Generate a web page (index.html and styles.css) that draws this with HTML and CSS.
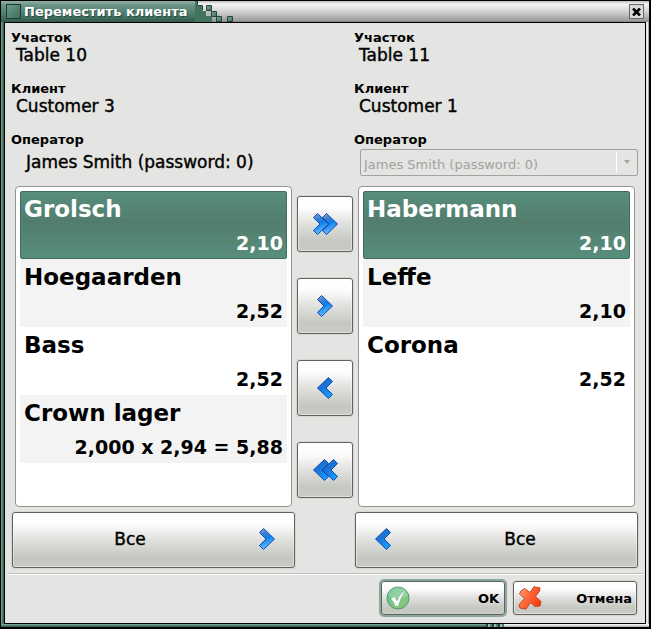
FILE: index.html
```html
<!DOCTYPE html>
<html lang="ru">
<head>
<meta charset="utf-8">
<title>Переместить клиента</title>
<link rel="stylesheet" href="styles.css">
</head>
<body>
<svg class="defs" width="0" height="0" aria-hidden="true">
  <defs>
    <linearGradient id="blue" x1="0" y1="0" x2="0.3" y2="1">
      <stop offset="0" stop-color="#8fb0e0"/>
      <stop offset="0.3" stop-color="#3f7fd0"/>
      <stop offset="0.55" stop-color="#0a80ea"/>
      <stop offset="1" stop-color="#6cc0ff"/>
    </linearGradient>
    <linearGradient id="blue-back" x1="0" y1="0" x2="0.6" y2="1">
      <stop offset="0" stop-color="#4a84d0"/>
      <stop offset="0.45" stop-color="#1c70d4"/>
      <stop offset="1" stop-color="#129cff"/>
    </linearGradient>
    <linearGradient id="green" x1="0" y1="0" x2="1" y2="1">
      <stop offset="0" stop-color="#58c088"/>
      <stop offset="0.5" stop-color="#7cc68c"/>
      <stop offset="1" stop-color="#8cc870"/>
    </linearGradient>
    <linearGradient id="red" x1="0" y1="0" x2="1" y2="0.6">
      <stop offset="0" stop-color="#ffa878"/>
      <stop offset="0.5" stop-color="#ff6838"/>
      <stop offset="1" stop-color="#f84010"/>
    </linearGradient>
    <linearGradient id="tile" x1="0" y1="0" x2="1" y2="1">
      <stop offset="0" stop-color="#7fa899"/>
      <stop offset="1" stop-color="#3f6e5d"/>
    </linearGradient>
    <path id="right" d="M4.500 .5 15.500 11 4.500 21.500 .5 17.500 7 11 .5 4.500Z" fill="url(#blue)" stroke="#0c48b0"/>
    <path id="left" d="M11.500 .5 .5 11 11.500 21.500 15.500 17.500 9 11 15.500 4.500Z" fill="url(#blue-back)" stroke="#0c48b0"/>
  </defs>
</svg>
<div class="window">
  <header class="titlebar">
    <div class="caption">
      <span class="sysmenu"></span>
      <h1 class="title">Переместить клиента</h1>
    </div>
    <svg class="tiles" width="40" height="21" viewBox="0 0 40 21" aria-hidden="true">
      <path d="M0 0h2v5h5v5h4v5h6v6H0z" fill="#44735f"/>
      <path d="M2.500 0v4.500h5v5" fill="none" stroke="#24453a"/>
      <g fill="url(#tile)" stroke="#24453a">
        <path d="M11.500 4.500h5v5h-5z"/><path d="M16.500 10.500h5v5h-5z"/><path d="M21.500 15.500h5v5h-5z"/><path d="M32.500 15.500h5v5h-5z"/>
      </g>
      <path d="M12 10h4v4h-4z" fill="#b8b8b8"/>
    </svg>
    <button class="close" type="button" aria-label="Закрыть">
      <svg width="9" height="8" viewBox="0 0 9 8"><path d="M1 .5 8 7.500M8 .5 1 7.500" stroke="#000" stroke-width="2.600"/></svg>
    </button>
  </header>
  <main class="content">
    <div class="board">
      <dl class="info">
        <div class="field"><dt>Участок</dt><dd>Table 10</dd></div>
        <div class="field"><dt>Клиент</dt><dd>Customer 3</dd></div>
        <div class="field operator"><dt>Оператор</dt><dd>James Smith (password: 0)</dd></div>
      </dl>
      <dl class="info second">
        <div class="field"><dt>Участок</dt><dd>Table 11</dd></div>
        <div class="field"><dt>Клиент</dt><dd>Customer 1</dd></div>
        <div class="field operator"><dt><label for="operator">Оператор</label></dt>
          <dd class="combo"><select id="operator" disabled><option>James Smith (password: 0)</option></select></dd></div>
      </dl>

      <ul class="list">
        <li class="item selected"><span class="name">Grolsch</span><span class="price">2,10</span></li>
        <li class="item"><span class="name">Hoegaarden</span><span class="price">2,52</span></li>
        <li class="item"><span class="name">Bass</span><span class="price">2,52</span></li>
        <li class="item"><span class="name">Crown lager</span><span class="price">2,000 x 2,94 = 5,88</span></li>
      </ul>
      <div class="movers">
        <button class="button mover" type="button" aria-label="Переместить все вправо"><svg width="25" height="22" viewBox="0 0 25 22"><use href="#right" x="9"/><use href="#right"/></svg></button>
        <button class="button mover" type="button" aria-label="Переместить вправо"><svg width="16" height="22" viewBox="0 0 16 22"><use href="#right"/></svg></button>
        <button class="button mover" type="button" aria-label="Переместить влево"><svg width="16" height="22" viewBox="0 0 16 22"><use href="#left"/></svg></button>
        <button class="button mover" type="button" aria-label="Переместить все влево"><svg width="25" height="22" viewBox="0 0 25 22"><use href="#left"/><use href="#left" x="9"/></svg></button>
      </div>
      <ul class="list">
        <li class="item selected"><span class="name">Habermann</span><span class="price">2,10</span></li>
        <li class="item"><span class="name">Leffe</span><span class="price">2,10</span></li>
        <li class="item"><span class="name">Corona</span><span class="price">2,52</span></li>
      </ul>

      <button class="button all" type="button"><span class="all-text">Все</span><svg width="16" height="22" viewBox="0 0 16 22"><use href="#right"/></svg></button>
      <button class="button all all-left" type="button"><svg width="16" height="22" viewBox="0 0 16 22"><use href="#left"/></svg><span class="all-text">Все</span></button>
    </div>
    <footer class="actions">
      <button class="button action default" type="button">
        <svg width="24" height="24" viewBox="0 0 24 24"><circle cx="12" cy="12" r="11" fill="url(#green)" stroke="#4c9a68"/><path d="M2 10a10 9 0 0 1 20 0q-10 4-20 0" fill="#fff" opacity=".2"/><path d="M5 12.500 8.500 11l2.500 4.500Q13.500 9 18.500 5 14 12 12 20h-2.500Q8 15.500 5 12.500Z" fill="#fff"/></svg>
        <span>OK</span>
      </button>
      <button class="button action" type="button">
        <svg width="24" height="24" viewBox="0 0 24 24"><path d="M3 5 6.500 2.500 12 6.500 16 .7 22 2 21.500 5 17.500 10.500 23 15.500 22 20 17 20.500 12.500 16.500 8 23 2 22 1 19 6.500 12.500 1.500 8Z" fill="url(#red)" stroke="#cc4020" stroke-linejoin="round"/></svg>
        <span>Отмена</span>
      </button>
    </footer>
  </main>
</div>
</body>
</html>
```
FILE: styles.css
```css
* { box-sizing: border-box; }

body {
  margin: 0;
  background: #000;
  font-family: "DejaVu Sans", sans-serif;
  font-size: 13px;
  color: #000;
}

.defs { position: absolute; }
svg { display: block; flex: none; }
button, select { font: inherit; color: inherit; }

.window {
  display: flex;
  flex-direction: column;
  min-height: 100vh;
  border: 1px solid #000;
  border-width: 1px 2px 2px 1px;
  padding: 0 3px 3px;
  background:
    repeating-linear-gradient(90deg, #24453a 0 2px, #9dbab0 2px 4px, #4c7f6d 4px 6px) 77% bottom / 18px 3px no-repeat,
    linear-gradient(#8fb0a4, #4c7f6d 50%, #35594c) left bottom / 75% 3px no-repeat,
    linear-gradient(#fff, #aaa) left bottom / 100% 3px no-repeat,
    linear-gradient(90deg, #7fa899, #4c7f6d 50%, #35594c) left top / 3px 100% no-repeat,
    linear-gradient(90deg, #ddd, #eee 50%, #888) right top / 3px 100% no-repeat;
}

.titlebar {
  display: flex;
  align-items: center;
  height: 21px;
  margin: 0 -3px;
  padding-right: 5px;
  background: linear-gradient(#bbb, #f4f4f4 15%, #d2d2d2 50%, #999 95%, #777);
}

.caption {
  display: flex;
  align-items: center;
  height: 21px;
  padding: 0 8px 0 5px;
  gap: 3px;
  background: linear-gradient(#8fb0a4, #6c9485 20%, #4c7f6d 60%, #35594c);
}

.sysmenu {
  width: 15px;
  height: 15px;
  border: 1px solid #1f3c33;
  background: linear-gradient(135deg, #6f9c8c, #3f6e5d);
}

.title {
  margin: 0;
  font-size: 13px;
  line-height: 20px;
  color: #fff;
  text-shadow: 1px 1px #2b4a40;
}

.close {
  display: grid;
  place-items: center;
  width: 15px;
  height: 15px;
  margin-left: auto;
  padding: 0;
  border: 1px solid #666;
  background: #d8d8d8;
}

.content {
  flex: 1;
  display: flex;
  flex-direction: column;
  border: 1px solid #000;
  background: #e4e4e2;
}

.board {
  flex: 1;
  display: grid;
  grid-template-columns: 1fr 56px 1fr;
  grid-template-rows: auto 1fr 56px;
  column-gap: 2px;
  padding: 7px 7px 5px;
}

.info { margin: 0 0 8px; }
.second { grid-column: 3; }
.field { margin-bottom: 17px; }
.operator { margin-bottom: 0; }

dt {
  margin-left: -1px;
  font-weight: bold;
  line-height: 16px;
}

dd {
  margin: 0 0 0 4px;
  font-size: 17px;
  line-height: 18px;
  -webkit-text-stroke: 0.4px;
}

.operator dd {
  height: 30px;
  margin-left: 14px;
  line-height: 29px;
}

.operator .combo {
  position: relative;
  margin-left: 5px;
  padding-top: 1px;
  font-size: 13px;
  -webkit-text-stroke: 0;
}

.combo select {
  display: block;
  width: 100%;
  height: 27px;
  padding: 0 3px 3px;
  appearance: none;
  border: 1px solid #a2a2a0;
  border-radius: 2px;
  background: linear-gradient(#fff, #fff) right 20px center / 1px 21px no-repeat #e4e4e2;
  color: #a2a2a0;
  opacity: 1;
}

.combo::after {
  content: "";
  position: absolute;
  top: 12px;
  right: 8px;
  border: 3px solid transparent;
  border-top: 4px solid #a2a2a0;
  border-bottom: 0;
}

.list {
  margin: 0 3px 5px;
  padding: 4px;
  list-style: none;
  border: 1px solid #92948e;
  border-radius: 4px;
  background: #fff;
}

.item {
  display: flex;
  flex-direction: column;
  height: 68px;
  padding: 4px;
  font-weight: bold;
}

.item:nth-child(even) { background: #f3f3f3; }

.item.selected {
  border-radius: 3px;
  background: linear-gradient(#588f7c, #527d6d 45%, #588f7c);
  box-shadow: inset 0 0 0 1px #436d5e;
  color: #fff;
}

.name { font-size: 23px; line-height: 28px; }
.price { margin-top: 8px; font-size: 19px; line-height: 24px; text-align: right; }

.movers {
  display: flex;
  flex-direction: column;
  justify-content: center;
  gap: 26px;
  margin-bottom: 5px;
}

.button {
  display: flex;
  align-items: center;
  justify-content: center;
  padding: 0;
  border: 1px solid #61635d;
  border-radius: 3px;
  background: linear-gradient(#fff, #fdfdfd 20%, #e0e1de 50%, #c5c7c1 82%, #c9cbc5);
  box-shadow: inset 0 0 0 1px #ffffff66, 0 0 0 1px #d6d7d3;
}

.mover { height: 56px; }

.all { padding: 0 19px 2px 0; font-size: 17px; -webkit-text-stroke: 0.4px; }
.all-text { flex: 1; padding-right: 12px; }
.all-left { grid-column: 3; padding: 0 0 2px 19px; }
.all-left .all-text { padding: 0 0 0 12px; }

.actions {
  display: flex;
  justify-content: flex-end;
  gap: 8px;
  margin: 0 2px;
  padding: 7px 6px 8px;
  border-top: 1px solid #c0c1bd;
  box-shadow: inset 0 1px #fff;
}

.action {
  width: 124px;
  height: 34px;
  padding: 0 4px;
  justify-content: space-between;
  font-weight: bold;
}

.default { padding-right: 5px; box-shadow: 0 0 0 2px #8aa89c; }
```
